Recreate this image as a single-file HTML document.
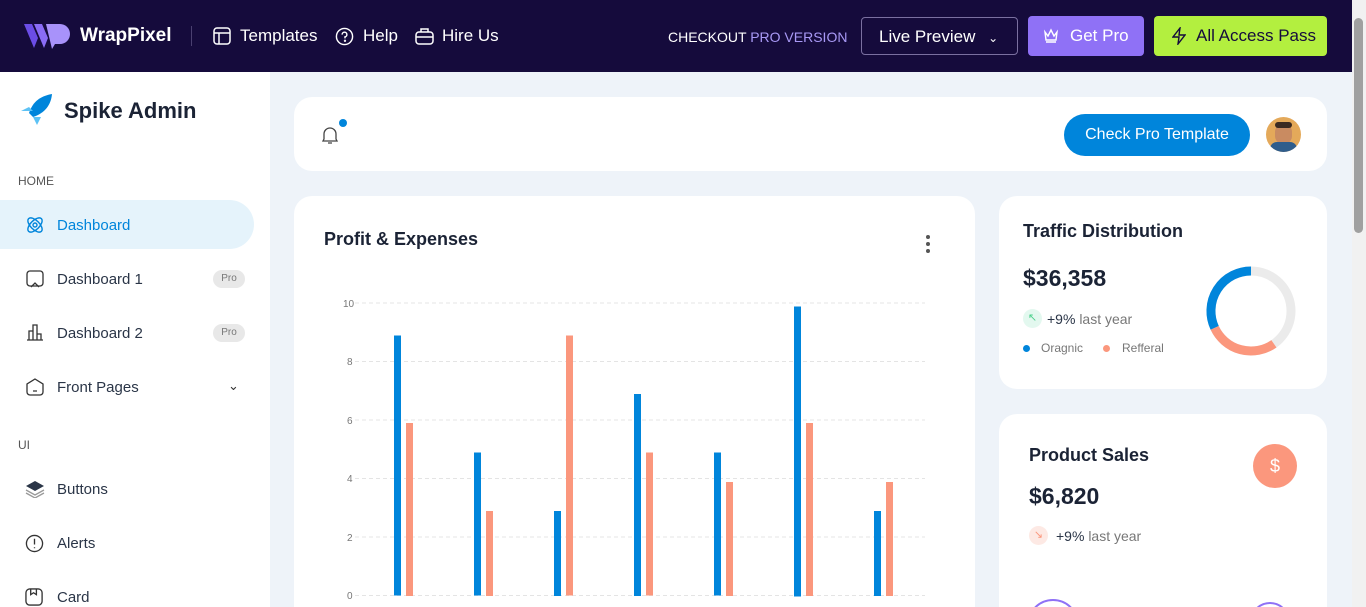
<!DOCTYPE html>
<html style="width:1366px;height:607px;overflow:hidden"><head><meta charset="utf-8"><style>
*{margin:0;padding:0;box-sizing:border-box}
body{width:1366px;height:607px;overflow:hidden;font-family:"Liberation Sans",sans-serif;background:#eef3f9;position:relative;color:#2a3547}
.a{position:absolute}
.top{left:0;top:0;width:1352px;height:72px;background:#150b3c}
.nav{color:#fff;font-size:17px;top:26px}
.side{left:0;top:72px;width:270px;height:535px;background:#fff}
.mi{position:absolute;left:57px;font-size:15px;color:#2a3547}
.pro{position:absolute;left:213px;width:32px;height:18px;border-radius:9px;background:#e8e8e8;color:#777;font-size:10px;text-align:center;line-height:18px}
.card{position:absolute;background:#fff;border-radius:18px 18px 0 0;overflow:hidden}
.sb{left:1352px;top:0;width:14px;height:607px;background:#f1f1f1}
</style></head><body>
<div class="a top"></div>
<svg class="a" style="left:24px;top:22px" width="48" height="28" viewBox="0 0 48 28"><path d="M0 2h8l6 14 -4 10z" fill="#6b4de6"/><path d="M10 2h8l6 14-4 10z" fill="#8a6cf5"/><path d="M22 2h14a10 10 0 0 1 0 20h-5l-3 5z" fill="#a892fa"/></svg>
<div class="a nav" style="left:80px;font-weight:bold;font-size:19px;top:25px">WrapPixel</div>
<div class="a" style="left:191px;top:26px;width:1px;height:20px;background:#4a4070"></div>
<svg class="a" style="left:213px;top:27px" width="18" height="18" viewBox="0 0 18 18" fill="none" stroke="#fff" stroke-width="1.5"><rect x="1" y="1" width="16" height="16" rx="3"/><path d="M1 6h16M6 6v11"/></svg>
<div class="a nav" style="left:240px">Templates</div>
<svg class="a" style="left:335px;top:27px" width="19" height="19" viewBox="0 0 20 20" fill="none" stroke="#fff" stroke-width="1.5"><circle cx="10" cy="10" r="8.5"/><path d="M7.5 8a2.5 2.5 0 1 1 3 2.4V12"/><circle cx="10.5" cy="14.5" r=".5"/></svg>
<div class="a nav" style="left:363px">Help</div>
<svg class="a" style="left:415px;top:27px" width="19" height="18" viewBox="0 0 19 18" fill="none" stroke="#fff" stroke-width="1.5"><rect x="1" y="5" width="17" height="12" rx="3"/><path d="M6 5V2h7v3M1 10h17"/></svg>
<div class="a nav" style="left:442px">Hire Us</div>
<div class="a" style="left:668px;top:29px;font-size:14px;color:#fff">CHECKOUT <span style="color:#a899f5">PRO VERSION</span></div>
<div class="a" style="left:861px;top:17px;width:157px;height:38px;border:1px solid #7a70a0;border-radius:4px;color:#fff;font-size:17px;padding:9px 0 0 17px">Live Preview <span style="font-size:12px;margin-left:8px">&#8964;</span></div>
<div class="a" style="left:1028px;top:16px;width:116px;height:40px;background:#8f71f6;border-radius:4px;color:#fff;font-size:17px;padding:10px 0 0 42px">Get Pro</div>
<svg class="a" style="left:1043px;top:28px" width="16" height="15" viewBox="0 0 16 15" fill="none" stroke="#fff" stroke-width="1.4"><path d="M2 4l3 4 3-6 3 6 3-4-1 8H3z M3 14h10"/></svg>
<div class="a" style="left:1154px;top:16px;width:173px;height:40px;background:#b3ef3f;border-radius:4px;color:#150b3c;font-size:17px;padding:10px 0 0 42px">All Access Pass</div>
<svg class="a" style="left:1172px;top:27px" width="14" height="18" viewBox="0 0 14 18" fill="none" stroke="#150b3c" stroke-width="1.4"><path d="M8 1L1 10h6l-1 7 7-9H7z"/></svg>
<div class="a sb"><div style="position:absolute;left:2px;top:18px;width:9px;height:215px;background:#a0a0a0;border-radius:5px"></div></div>

<div class="a side"></div>
<svg class="a" style="left:19px;top:93px" width="34" height="34" viewBox="0 0 34 34"><path d="M10 20C14 8 22 3 33 1c-1 11-7 19-19 23z" fill="#0085db"/><path d="M2 18l8-4 4 4z M14 24l4 8 4-8z" fill="#5dc2f5"/></svg>
<div class="a" style="left:64px;top:98px;font-size:22px;font-weight:bold;color:#1b2335">Spike Admin</div>
<div class="a" style="left:18px;top:174px;font-size:12px;color:#555">HOME</div>
<div class="a" style="left:0;top:200px;width:254px;height:49px;background:#e5f3fb;border-radius:0 25px 25px 0"></div>
<svg class="a" style="left:25px;top:215px" width="20" height="20" viewBox="0 0 20 20" fill="none" stroke="#0085db" stroke-width="1.4"><ellipse cx="10" cy="10" rx="9" ry="4.5" transform="rotate(45 10 10)"/><ellipse cx="10" cy="10" rx="9" ry="4.5" transform="rotate(-45 10 10)"/><circle cx="10" cy="10" r="2"/></svg>
<div class="mi" style="top:217px;color:#0085db">Dashboard</div>
<svg class="a" style="left:26px;top:270px" width="18" height="18" viewBox="0 0 18 18" fill="none" stroke="#333" stroke-width="1.3"><rect x="1" y="1" width="16" height="15" rx="3"/><path d="M5 17l4-4 4 4"/></svg>
<div class="mi" style="top:271px">Dashboard 1</div><div class="pro" style="top:270px">Pro</div>
<svg class="a" style="left:26px;top:323px" width="18" height="18" viewBox="0 0 18 18" fill="none" stroke="#333" stroke-width="1.3"><path d="M1 17h16M3 17V8h4v9M7 17V2h4v15M11 17v-6h4v6"/></svg>
<div class="mi" style="top:325px">Dashboard 2</div><div class="pro" style="top:324px">Pro</div>
<svg class="a" style="left:26px;top:378px" width="18" height="18" viewBox="0 0 18 18" fill="none" stroke="#333" stroke-width="1.3"><path d="M9 1l8 5v8a3 3 0 0 1-3 3H4a3 3 0 0 1-3-3V6z M7 13h4"/></svg>
<div class="mi" style="top:379px">Front Pages</div>
<div class="a" style="left:228px;top:378px;font-size:13px;color:#333">&#8964;</div>
<div class="a" style="left:18px;top:438px;font-size:12px;color:#555">UI</div>
<svg class="a" style="left:25px;top:480px" width="20" height="18" viewBox="0 0 20 18"><path d="M10 1l9 5-9 5-9-5z" fill="#2a3547"/><path d="M1 10l9 5 9-5M1 13l9 5 9-5" fill="none" stroke="#999" stroke-width="1.3"/></svg>
<div class="mi" style="top:481px">Buttons</div>
<svg class="a" style="left:25px;top:534px" width="19" height="19" viewBox="0 0 20 20" fill="none" stroke="#333" stroke-width="1.4"><circle cx="10" cy="10" r="8.5"/><path d="M10 5v6M10 14v1"/></svg>
<div class="mi" style="top:535px">Alerts</div>
<svg class="a" style="left:25px;top:588px" width="19" height="19" viewBox="0 0 20 20" fill="none" stroke="#333" stroke-width="1.4"><rect x="1" y="1" width="17" height="17" rx="4"/><path d="M6 1v6l3-2 3 2V1"/></svg>
<div class="mi" style="top:589px">Card</div>

<div class="card" style="left:294px;top:97px;width:1033px;height:74px;border-radius:18px"></div>
<svg class="a" style="left:320px;top:125px" width="20" height="20" viewBox="0 0 20 20" fill="none" stroke="#444" stroke-width="1.3"><path d="M4 14V9a6 6 0 0 1 12 0v5l1 2H3z M8 18h4"/></svg>
<div class="a" style="left:339px;top:119px;width:8px;height:8px;border-radius:50%;background:#0085db"></div>
<div class="a" style="left:1064px;top:114px;width:186px;height:42px;border-radius:21px;background:#0085db;color:#fff;font-size:16px;text-align:center;line-height:42px">Check Pro Template</div>
<div class="a" style="left:1266px;top:117px;width:35px;height:35px;border-radius:50%;background:#e4a95a;overflow:hidden"><div style="position:absolute;left:9px;top:7px;width:17px;height:20px;border-radius:8px;background:#c98b61"></div><div style="position:absolute;left:4px;top:25px;width:27px;height:14px;border-radius:8px;background:#2f5d8c"></div><div style="position:absolute;left:9px;top:5px;width:17px;height:6px;border-radius:4px;background:#3a2a22"></div></div>

<div class="card" style="left:294px;top:196px;width:681px;height:411px"></div>
<div class="a" style="left:324px;top:229px;font-size:18px;font-weight:bold;color:#1b2335">Profit &amp; Expenses</div>
<div class="a" style="left:926px;top:235px;width:4px;height:4px;border-radius:50%;background:#555;box-shadow:0 7px 0 #555,0 14px 0 #555"></div>
<svg class="a" style="left:330px;top:290px" width="600" height="317">
<g stroke="#e4e4e4" stroke-dasharray="4 3"><line x1="25" x2="595" y1="13" y2="13"/><line x1="25" x2="595" y1="71.5" y2="71.5"/><line x1="25" x2="595" y1="130" y2="130"/><line x1="25" x2="595" y1="188.5" y2="188.5"/><line x1="25" x2="595" y1="247" y2="247"/><line x1="25" x2="595" y1="305.5" y2="305.5"/></g>
<g font-size="10" fill="#777" font-family="Liberation Sans"><text x="13" y="17">10</text><text x="17" y="75">8</text><text x="17" y="134">6</text><text x="17" y="192">4</text><text x="17" y="251">2</text><text x="17" y="309">0</text></g>
<g fill="#0085db"><rect x="64" y="45.5" width="7" height="260"/><rect x="144" y="162.5" width="7" height="143"/><rect x="224" y="221" width="7" height="85"/><rect x="304" y="104" width="7" height="202"/><rect x="384" y="162.5" width="7" height="143"/><rect x="464" y="16.5" width="7" height="290"/><rect x="544" y="221" width="7" height="85"/></g>
<g fill="#fb977d"><rect x="76" y="133" width="7" height="173"/><rect x="156" y="221" width="7" height="85"/><rect x="236" y="45.5" width="7" height="260"/><rect x="316" y="162.5" width="7" height="143"/><rect x="396" y="192" width="7" height="114"/><rect x="476" y="133" width="7" height="173"/><rect x="556" y="192" width="7" height="114"/></g>
</svg>

<div class="card" style="left:999px;top:196px;width:328px;height:193px;border-radius:18px"></div>
<div class="a" style="left:1023px;top:221px;font-size:18px;font-weight:bold;color:#1b2335">Traffic Distribution</div>
<div class="a" style="left:1023px;top:265px;font-size:23px;font-weight:bold;color:#1b2335">$36,358</div>
<div class="a" style="left:1023px;top:309px;width:19px;height:19px;border-radius:50%;background:#e3f8ef;color:#4bd08b;font-size:11px;text-align:center;line-height:19px">&#8598;</div>
<div class="a" style="left:1047px;top:311px;font-size:14px;color:#2a3547">+9% <span style="color:#777">last year</span></div>
<div class="a" style="left:1023px;top:345px;width:7px;height:7px;border-radius:50%;background:#0085db"></div>
<div class="a" style="left:1041px;top:341px;font-size:12px;color:#777">Oragnic</div>
<div class="a" style="left:1103px;top:345px;width:7px;height:7px;border-radius:50%;background:#fb977d"></div>
<div class="a" style="left:1122px;top:341px;font-size:12px;color:#777">Refferal</div>
<svg class="a" style="left:1201px;top:261px" width="100" height="100" viewBox="1201 261 100 100" fill="none" stroke-width="9">
<circle cx="1251" cy="311" r="40" stroke="#ebebeb"/>
<path d="M1251 271A40 40 0 0 0 1214.7 327.9" stroke="#0085db"/>
<path d="M1214.7 327.9A40 40 0 0 0 1273.9 343.8" stroke="#fb977d"/>
</svg>

<div class="card" style="left:999px;top:414px;width:328px;height:193px">
<div class="a" style="left:30px;top:31px;font-size:18px;font-weight:bold;color:#1b2335">Product Sales</div>
<div class="a" style="left:254px;top:30px;width:44px;height:44px;border-radius:50%;background:#fb977d;color:#fff;font-size:18px;text-align:center;line-height:44px">$</div>
<div class="a" style="left:30px;top:69px;font-size:23px;font-weight:bold;color:#1b2335">$6,820</div>
<div class="a" style="left:30px;top:112px;width:19px;height:19px;border-radius:50%;background:#fde9e4;color:#fb977d;font-size:11px;text-align:center;line-height:19px">&#8600;</div>
<div class="a" style="left:57px;top:114px;font-size:14px;color:#2a3547">+9% <span style="color:#777">last year</span></div>
<div class="a" style="left:28px;top:185px;width:52px;height:52px;border-radius:50%;border:2px solid #8f71f6"></div>
<div class="a" style="left:251px;top:188px;width:40px;height:40px;border-radius:50%;border:2px solid #8f71f6"></div>
</div>
</body></html>
